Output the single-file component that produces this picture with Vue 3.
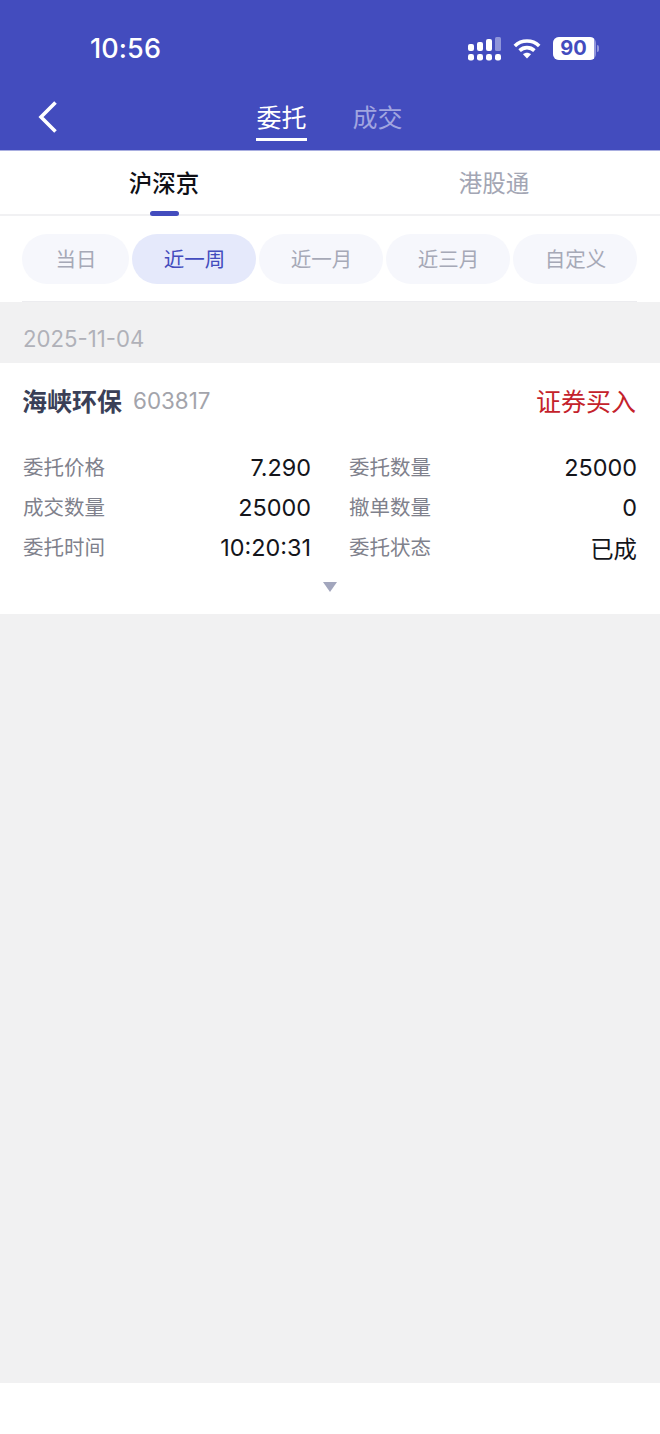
<script setup>
const chips = [
  { label: '当日', cls: 'chip-short' },
  { label: '近一周', active: true },
  { label: '近一月' },
  { label: '近三月' },
  { label: '自定义' },
]
const rows = [
  ['委托价格', '7.290', '委托数量', '25000'],
  ['成交数量', '25000', '撤单数量', '0'],
  ['委托时间', '10:20:31', '委托状态', '已成'],
]
</script>

<template>
  <div class="page">
    <header class="header">
      <div class="status">
        <span class="time">10:56</span>
        <div class="status-icons">
          <svg class="signal" width="33" height="24" viewBox="0 0 33 24" aria-hidden="true">
            <g fill="#fff">
              <rect x="0" y="7" width="6" height="7" rx="2" />
              <rect x="9" y="5" width="6" height="9" rx="2" />
              <rect x="18" y="2" width="6" height="12" rx="2" />
              <rect x="0" y="17" width="6" height="6.5" rx="2.2" />
              <rect x="9" y="17" width="6" height="6.5" rx="2.2" />
              <rect x="18" y="17" width="6" height="6.5" rx="2.2" />
              <rect x="27" y="17" width="6" height="6.5" rx="2.2" />
            </g>
            <rect x="27" y="0" width="6" height="14" rx="1.5" fill="#8f95da" />
          </svg>
          <svg class="wifi" width="28" height="21" viewBox="0 0 28 21" aria-hidden="true">
            <g fill="none" stroke="#fff" stroke-width="3.6">
              <path d="M1.8 8 C8.5 1.4 19.5 1.4 26.2 8" />
              <path d="M6.6 12.6 C10.8 8.6 17.2 8.6 21.4 12.6" />
            </g>
            <path d="M10 16.2 C12.4 14.2 15.6 14.2 18 16.2 L14 20.5 Z" fill="#fff" />
          </svg>
          <div class="battery">
            <div class="battery-body">
              <span class="battery-level">90</span>
              <span class="battery-rest"></span>
            </div>
            <span class="battery-cap"></span>
          </div>
        </div>
      </div>
      <nav class="nav">
        <svg class="back" width="22" height="34" viewBox="0 0 22 34" aria-hidden="true">
          <path d="M18.5 2.5 L4 17 L18.5 31.5" fill="none" stroke="#fff" stroke-width="3.6" />
        </svg>
        <div class="nav-tabs">
          <span class="nav-tab nav-tab-active">委托</span>
          <span class="nav-tab">成交</span>
        </div>
      </nav>
    </header>

    <div class="market-tabs">
      <div class="market-tab market-tab-active">沪深京</div>
      <div class="market-tab">港股通</div>
    </div>

    <div class="chips-wrap">
      <div class="chips">
        <span
          v-for="chip in chips"
          :key="chip.label"
          class="chip"
          :class="[chip.cls, { 'chip-active': chip.active }]"
        >{{ chip.label }}</span>
      </div>
    </div>

    <main class="content">
      <div class="date">2025-11-04</div>
      <section class="card">
        <div class="card-head">
          <div class="stock">
            <span class="stock-name">海峡环保</span>
            <span class="stock-code">603817</span>
          </div>
          <span class="direction">证券买入</span>
        </div>
        <div class="grid">
          <div v-for="row in rows" :key="row[0]" class="row">
            <div class="cell cell-left">
              <span class="label">{{ row[0] }}</span>
              <span class="value">{{ row[1] }}</span>
            </div>
            <div class="cell cell-right">
              <span class="label">{{ row[2] }}</span>
              <span class="value">{{ row[3] }}</span>
            </div>
          </div>
        </div>
        <div class="expand"></div>
      </section>
    </main>

    <footer class="footer"></footer>
  </div>
</template>

<style>
html, body { margin: 0; background: #fff; }
</style>

<style scoped>
.page {
  width: 660px;
  height: 1434px;
  display: flex;
  flex-direction: column;
  overflow: hidden;
  background: #fff;
  font-family: Inter, "Noto Sans CJK SC", sans-serif;
}
.header {
  height: 150px;
  flex: none;
  background: #434cbe;
  color: #fff;
  box-shadow: 0 1px 0 #a9aee0;
  position: relative;
}
.status {
  height: 96px;
  display: flex;
  justify-content: space-between;
  box-sizing: border-box;
  padding: 0 61px 0 90px;
}
.time {
  font-size: 27px;
  font-weight: 500;
  line-height: 33px;
  margin-top: 32px;
  letter-spacing: 0.1px;
}
.status-icons {
  display: flex;
  align-items: flex-start;
  padding-top: 37px;
}
.signal { margin-right: 12px; }
.wifi { margin-right: 12px; margin-top: 1px; }
.battery {
  display: flex;
  align-items: center;
  height: 23px;
}
.battery-body {
  width: 43px;
  height: 23px;
  border-radius: 6px;
  display: flex;
  overflow: hidden;
  background: #9297db;
}
.battery-level {
  width: 41px;
  background: #fff;
  color: #434cbe;
  font-size: 20px;
  font-weight: 700;
  line-height: 23px;
  text-align: center;
}
.battery-cap {
  width: 2px;
  height: 7px;
  margin-left: 1px;
  border-radius: 0 2px 2px 0;
  background: #9297db;
}
.nav {
  height: 54px;
  position: relative;
  display: flex;
  justify-content: center;
}
.back {
  position: absolute;
  left: 37px;
  top: 4px;
}
.nav-tabs {
  display: flex;
  gap: 45px;
  margin-left: -1px;
}
.nav-tab {
  width: 51px;
  height: 45px;
  box-sizing: border-box;
  font-size: 25px;
  line-height: 34px;
  padding-top: 5px;
  text-align: center;
  white-space: nowrap;
  color: #a1a5e0;
}
.nav-tab-active {
  color: #fff;
  border-bottom: 3px solid #fff;
  height: 45px;
}
.market-tabs {
  height: 66px;
  flex: none;
  box-sizing: border-box;
  display: flex;
  gap: 2px;
  border-bottom: 2px solid #f1f1f3;
}
.market-tab {
  width: 328px;
  text-align: center;
  font-size: 23.5px;
  line-height: 68px;
  height: 66px;
  color: #a3a6b4;
  position: relative;
}
.market-tab-active { color: #0f1016; font-weight: 500; }
.market-tab-active::after {
  content: "";
  position: absolute;
  left: 150px;
  bottom: 0;
  width: 29px;
  height: 5px;
  border-radius: 3px;
  background: #434cbe;
}
.chips-wrap {
  height: 86px;
  flex: none;
  padding: 18px 23px 0 22px;
  box-sizing: border-box;
}
.chips {
  display: flex;
  gap: 3px;
  padding-bottom: 17px;
  border-bottom: 1px solid #ececef;
}
.chip {
  width: 124px;
  height: 50px;
  border-radius: 25px;
  background: #f6f7fc;
  color: #a6a9b7;
  font-size: 20.5px;
  line-height: 52px;
  text-align: center;
  text-indent: 1px;
}
.chip-short { width: 107px; }
.chip-active {
  background: #e5e9fb;
  color: #434cbe;
}
.content {
  flex: 1;
  background: #f1f1f2;
}
.date {
  height: 61px;
  box-sizing: border-box;
  padding-left: 23px;
  font-size: 22.2px;
  line-height: 73px;
  color: #b0b1b9;
  overflow: hidden;
}
.card {
  height: 251px;
  box-sizing: border-box;
  padding: 0 23px;
  background: #fff;
  position: relative;
}
.card-head {
  height: 76px;
  box-sizing: border-box;
  padding-bottom: 2px;
  display: flex;
  justify-content: space-between;
  align-items: center;
}
.stock {
  display: flex;
  align-items: center;
  gap: 11px;
  margin-left: -1px;
}
.stock-name {
  font-size: 25px;
  font-weight: 700;
  color: #3a3f57;
}
.stock-code {
  font-size: 22.4px;
  color: #a3a4ab;
  margin-top: 1px;
}
.direction {
  font-size: 25px;
  color: #c4222b;
  margin-right: 1px;
  margin-top: -1px;
}
.grid {
  display: flex;
  flex-direction: column;
  gap: 10px;
  padding-top: 13px;
}
.row {
  height: 30px;
  display: flex;
}
.cell {
  display: flex;
  justify-content: space-between;
  align-items: center;
}
.cell-left { width: 288px; }
.cell-right { width: 288px; margin-left: 38px; }
.label {
  font-size: 20.5px;
  color: #7f818c;
  margin-top: -3px;
}
.value {
  font-size: 23.4px;
  color: #14151b;
  margin-top: 1px;
}
.expand {
  position: absolute;
  left: 323px;
  top: 219px;
  width: 0;
  height: 0;
  border-left: 7px solid transparent;
  border-right: 7px solid transparent;
  border-top: 10px solid #a2a6bd;
}
.footer {
  height: 51px;
  flex: none;
  background: #fff;
}
</style>
